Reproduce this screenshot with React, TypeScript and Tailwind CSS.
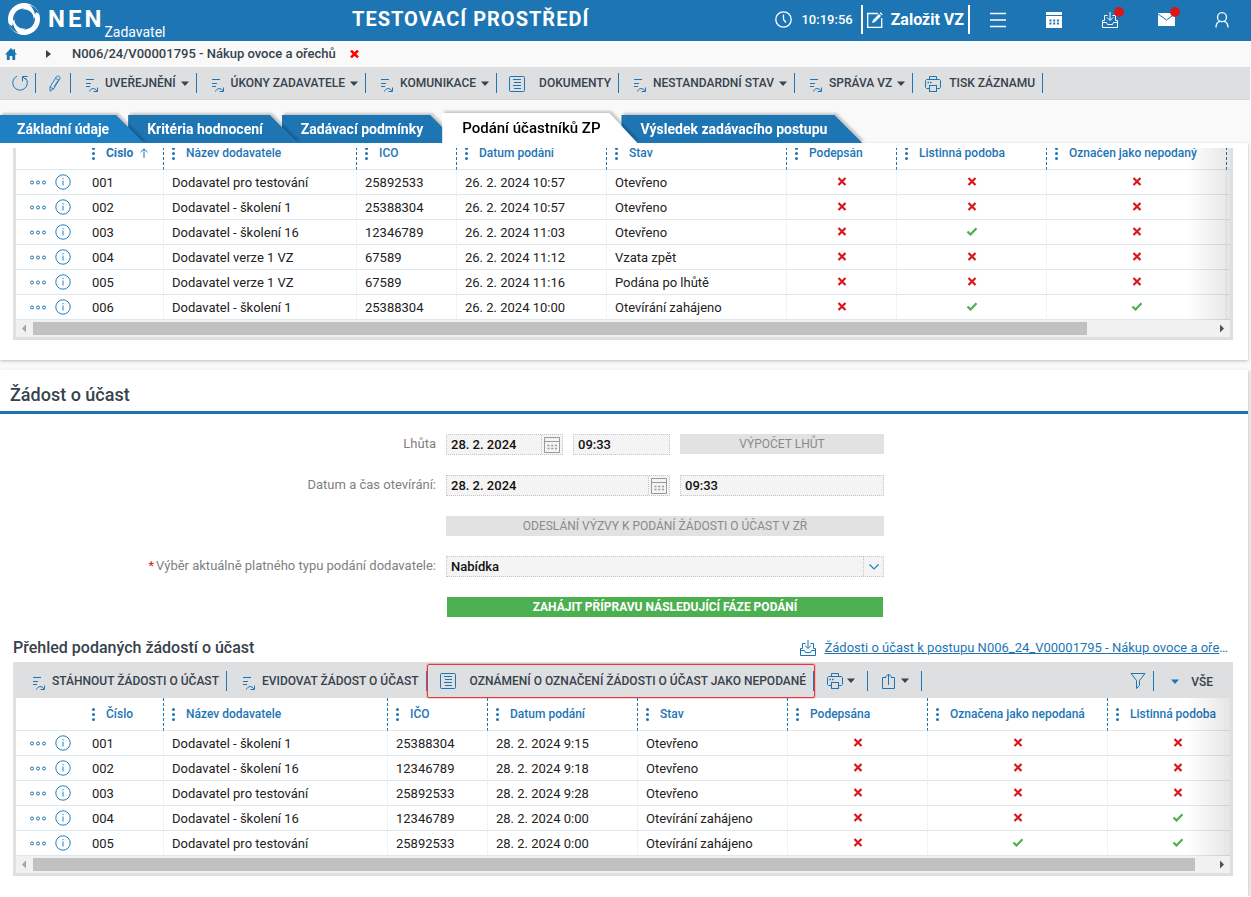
import React from 'react';

interface Column {
  label: string;
  width: string;
  sorted?: boolean;
}

type Cell = string | boolean;

interface SubmissionTableProps {
  caption: string;
  columns: Column[];
  rows: Cell[][];
  thumb: number;
  filler?: boolean;
  scrolled?: boolean;
}

const ListIcon = () => (
  <svg width="14" height="16" viewBox="0 0 14 16" fill="none" stroke="#1e75b4" className="shrink-0">
    <path d="M1 2.500h8M1 6.500h5M1 9.500h4" />
    <path d="M4.500 14.500c1-3.500 5.500-4 7.500-.5M12.500 10.500v4H8.500" />
  </svg>
);

const DocumentIcon = () => (
  <svg width="16" height="16" viewBox="0 0 16 16" fill="none" stroke="#1e75b4" className="shrink-0">
    <rect x=".5" y=".5" width="15" height="15" rx="1" />
    <path d="M4 3.500h8M5 6.500h7M4 9.500h8M5 12.500h7" />
  </svg>
);

const PrintIcon = () => (
  <svg width="16" height="16" viewBox="0 0 16 16" fill="none" stroke="#1e75b4" className="shrink-0">
    <path d="M4.500 3.500v-3h7v3M4.500 12.500h-3l-1-1v-7l1-1h13l1 1v7l-1 1h-3" />
    <rect x="4.500" y="9.500" width="7" height="6" />
    <path d="M2.500 6.500h1.500M5 6.500h1.500" strokeWidth="1.500" />
  </svg>
);

const InboxIcon = ({ color = '#1e75b4' }: { color?: string }) => (
  <svg width="16" height="16" viewBox="0 0 16 16" fill="none" stroke={color} className="shrink-0">
    <path d="M5.500 3.500H2.500v5M10.500 3.500h3v5M.5 8.500v7h15v-7h-2M2.500 8.500H.5M.5 10.500h4l1 2h5l1-2h4M8 0v8M5 5.500l3 3 3-3" />
  </svg>
);

const CalendarIcon = () => (
  <svg width="16" height="16" viewBox="0 0 16 16" fill="none" stroke="#999" className="shrink-0">
    <path d="M.5 .5h15v15H.5zM.5 4.500h15" />
    <path d="M3.500 8.500h10M3.500 11.500h10" strokeWidth="1.500" strokeDasharray="2 1.700" />
  </svg>
);

const Caret = ({ color = '#36424c' }: { color?: string }) => (
  <svg width="8" height="5" viewBox="0 0 8 5" fill={color} className="shrink-0">
    <path d="M0 .5h8L4 5z" />
  </svg>
);

const Mark = ({ value }: { value: boolean }) =>
  value ? (
    <svg width="12" height="9" viewBox="0 0 12 9" fill="none" stroke="#4caf50" strokeWidth="2.200" className="mx-auto mb-1">
      <title>Ano</title>
      <path d="M1.500 4.500L4.500 7.500L10.500 1.200" />
    </svg>
  ) : (
    <svg width="10" height="9" viewBox="0 0 10 9" fill="none" stroke="#d8171b" strokeWidth="2.200" className="mx-auto mb-1">
      <title>Ne</title>
      <path d="M1.500 1l7 7M8.500 1l-7 7" />
    </svg>
  );

const RowActions = () => (
  <div className="flex items-center gap-[9px] pl-[14px]">
    <button type="button" aria-label="Akce">
      <svg width="16" height="5" viewBox="0 0 16 5" fill="none" stroke="#1e75b4">
        <circle cx="2" cy="2.500" r="1.500" />
        <circle cx="8" cy="2.500" r="1.500" />
        <circle cx="14" cy="2.500" r="1.500" />
      </svg>
    </button>
    <button type="button" aria-label="Detail">
      <svg width="16" height="16" viewBox="0 0 16 16" fill="none" stroke="#1e80c2">
        <circle cx="8" cy="8" r="7.200" />
        <path d="M8 6.500v5M8 4v1.200" />
      </svg>
    </button>
  </div>
);

const Scrollbar = ({ thumb }: { thumb: number }) => (
  <div className="flex h-[17px] items-center bg-[#f1f1f1]">
    <svg width="17" height="9" viewBox="0 0 17 9" fill="#a3a3a3" className="shrink-0">
      <path d="M10 .5v8L6 4.500z" />
    </svg>
    <div className="h-[13px] flex-1">
      <div className="h-full bg-[#c1c1c1]" style={{ width: `${thumb}%` }} />
    </div>
    <svg width="17" height="9" viewBox="0 0 17 9" fill="#505050" className="shrink-0">
      <path d="M7 .5v8l4-4z" />
    </svg>
  </div>
);

const SubmissionTable: React.FC<SubmissionTableProps> = ({ caption, columns, rows, thumb, filler, scrolled }) => (
  <div className="border-x-[3px] border-b-[3px] border-[#dedfe0]">
    <div className="relative overflow-hidden">
      <table
        aria-label={caption}
        className={`w-full table-fixed border-separate border-spacing-0 text-[13px] leading-[18px] text-[#222] ${scrolled ? '-mt-[11px]' : ''}`}
      >
        <colgroup>
          <col className="w-[68px]" />
          {columns.map((column) => (
            <col key={column.label} className={column.width} />
          ))}
          {filler && <col />}
        </colgroup>
        <thead>
          <tr className="text-left text-xs text-[#1e75b4]">
            <th className="h-[33px] border-b border-[#dde8ec]" />
            {columns.map(({ label, sorted }) => (
              <th key={label} className="h-[33px] border-r border-b border-r-[#1e75b4] border-b-[#dde8ec] p-0 pl-2 font-medium [border-right-style:dashed]">
                <div className="flex items-center gap-[11px] whitespace-nowrap">
                  <svg width="3" height="13" viewBox="0 0 3 13" fill="#1e75b4" className="shrink-0">
                    <circle cx="1.500" cy="1.500" r="1.500" />
                    <circle cx="1.500" cy="6.500" r="1.500" />
                    <circle cx="1.500" cy="11.500" r="1.500" />
                  </svg>
                  <span className={sorted ? 'font-bold' : ''}>{label}</span>
                  {sorted && (
                    <svg width="8" height="10" viewBox="0 0 8 10" fill="none" stroke="#1e75b4" className="-ml-1 shrink-0">
                      <path d="M4 10V1M.5 4.200L4 .8l3.500 3.400" />
                    </svg>
                  )}
                </div>
              </th>
            ))}
            {filler && <th className="border-b border-[#dde8ec]" />}
          </tr>
        </thead>
        <tbody>
          {rows.map((row) => (
            <tr key={String(row[0])}>
              <td className="h-[25px] border-b border-[#dde8ec] p-0">
                <RowActions />
              </td>
              {row.map((cell, index) => (
                <td
                  key={index}
                  className="h-[25px] border-r border-b border-[#dde8ec] p-0 pt-0.5 whitespace-nowrap [border-right-style:dotted]"
                >
                  {typeof cell === 'boolean' ? <Mark value={cell} /> : <span className="pl-2">{cell}</span>}
                </td>
              ))}
              {filler && <td className="border-b border-[#dde8ec]" />}
            </tr>
          ))}
        </tbody>
      </table>
      <div className="pointer-events-none absolute inset-y-0 right-0 w-11 bg-linear-to-r from-transparent to-black/10" />
    </div>
    <Scrollbar thumb={thumb} />
  </div>
);

interface ToolButtonProps {
  label: string;
  icon?: 'list' | 'document' | 'print';
  caret?: boolean;
}

const ToolButton: React.FC<ToolButtonProps> = ({ label, icon = 'list', caret }) => (
  <button
    type="button"
    className={`flex h-5 items-center border-r border-[#1e75b4] pr-[7px] whitespace-nowrap ${icon === 'list' ? 'pl-[14px]' : 'pl-3'}`}
  >
    {icon === 'list' && <span className="mt-1 mr-1.5"><ListIcon /></span>}
    {icon === 'document' && <span className="mt-px mr-[14px]"><DocumentIcon /></span>}
    {icon === 'print' && <span className="mt-px mr-2"><PrintIcon /></span>}
    {label}
    {caret && <span className="ml-[5px]"><Caret /></span>}
  </button>
);

const tabs = [
  { label: 'Základní údaje', layer: 'z-30', look: 'h-7 bg-[#1e80c2] pr-[35px] pl-[17px] font-bold text-white text-sm' },
  { label: 'Kritéria hodnocení', layer: 'z-20 -ml-4', look: 'h-7 bg-[#1e75b4] pr-[35px] pl-[19px] font-bold text-white text-sm' },
  { label: 'Zadávací podmínky', layer: 'z-10 -ml-4', look: 'h-7 bg-[#1e75b4] pr-[35px] pl-[19px] font-bold text-white text-sm' },
  { label: 'Podání účastníků ZP', layer: 'z-40 -ml-4', look: 'h-[30px] bg-white pr-[37px] pl-5 font-medium text-black text-[15px]' },
  { label: 'Výsledek zadávacího postupu', layer: 'z-0 -ml-4', look: 'h-7 bg-[#1e75b4] pr-[35px] pl-[19px] font-bold text-white text-sm' }
];

const bidColumns: Column[] = [
  { label: 'Číslo', width: 'w-[80px]', sorted: true },
  { label: 'Název dodavatele', width: 'w-[193px]' },
  { label: 'IČO', width: 'w-[100px]' },
  { label: 'Datum podání', width: 'w-[150px]' },
  { label: 'Stav', width: 'w-[180px]' },
  { label: 'Podepsán', width: 'w-[110px]' },
  { label: 'Listinná podoba', width: 'w-[150px]' },
  { label: 'Označen jako nepodaný', width: 'w-[180px]' }
];

const bids: Cell[][] = [
  ['001', 'Dodavatel pro testování', '25892533', '26. 2. 2024 10:57', 'Otevřeno', false, false, false],
  ['002', 'Dodavatel - školení 1', '25388304', '26. 2. 2024 10:57', 'Otevřeno', false, false, false],
  ['003', 'Dodavatel - školení 16', '12346789', '26. 2. 2024 11:03', 'Otevřeno', false, true, false],
  ['004', 'Dodavatel verze 1 VZ', '67589', '26. 2. 2024 11:12', 'Vzata zpět', false, false, false],
  ['005', 'Dodavatel verze 1 VZ', '67589', '26. 2. 2024 11:16', 'Podána po lhůtě', false, false, false],
  ['006', 'Dodavatel - školení 1', '25388304', '26. 2. 2024 10:00', 'Otevírání zahájeno', false, true, true]
];

const requestColumns: Column[] = [
  { label: 'Číslo', width: 'w-[80px]' },
  { label: 'Název dodavatele', width: 'w-[224px]' },
  { label: 'IČO', width: 'w-[100px]' },
  { label: 'Datum podání', width: 'w-[150px]' },
  { label: 'Stav', width: 'w-[150px]' },
  { label: 'Podepsána', width: 'w-[140px]' },
  { label: 'Označena jako nepodaná', width: 'w-[180px]' },
  { label: 'Listinná podoba', width: 'w-[140px]' }
];

const requests: Cell[][] = [
  ['001', 'Dodavatel - školení 1', '25388304', '28. 2. 2024 9:15', 'Otevřeno', false, false, false],
  ['002', 'Dodavatel - školení 16', '12346789', '28. 2. 2024 9:18', 'Otevřeno', false, false, false],
  ['003', 'Dodavatel pro testování', '25892533', '28. 2. 2024 9:28', 'Otevřeno', false, false, false],
  ['004', 'Dodavatel - školení 16', '12346789', '28. 2. 2024 0:00', 'Otevírání zahájeno', false, false, true],
  ['005', 'Dodavatel pro testování', '25892533', '28. 2. 2024 0:00', 'Otevírání zahájeno', false, true, true]
];

const fieldClass = 'border border-dotted border-[#c4c4c4] bg-[#f4f4f4] text-[13px] font-medium text-[#111]';

const DateField = ({ id, width }: { id: string; width: string }) => (
  <div className={`flex h-[21px] items-stretch ${fieldClass} ${width}`}>
    <input id={id} defaultValue="28. 2. 2024" className="w-0 flex-1 border-r border-dotted border-[#c4c4c4] pl-1 outline-none" />
    <button type="button" aria-label="Vybrat datum" className="flex w-5 items-center justify-center">
      <CalendarIcon />
    </button>
  </div>
);

const Header = () => (
  <header className="flex h-[41px] items-start bg-[#1e75b4] pr-[21px] text-white">
    <div className="flex w-[352px] shrink-0 pl-2">
      <svg width="32" height="32" viewBox="0 0 32 32" className="mt-[3px]">
        <circle cx="16" cy="16" r="16" fill="#fff" />
        <circle cx="16" cy="16" r="9.800" fill="#1e75b4" />
        <path d="M.8 20.500C2.500 26 6.500 29 10.500 30C7.500 27.500 5.500 24 4.800 19.500C5 24 3 23 .8 20.500z" fill="#1e75b4" />
        <path d="M31.200 11.500C29.500 6 25.500 3 21.500 2C24.500 4.500 26.500 8 27.200 12.500C27 8 29 9 31.200 11.500z" fill="#1e75b4" />
        <path d="M5 18C4.500 11 9 5.500 16 5.500L10 11z" fill="#1e75b4" />
        <path d="M27 14C27.500 21 23 26.500 16 26.500L22 21z" fill="#1e75b4" />
      </svg>
      <span className="mt-[5px] ml-2 text-2xl leading-7 font-bold tracking-[3px]">NEN</span>
      <span className="mt-6 text-sm leading-4">Zadavatel</span>
    </div>
    <div className="mt-1.5 text-xl leading-[26px] font-bold tracking-[1px] whitespace-nowrap">TESTOVACÍ PROSTŘEDÍ</div>
    <div className="mt-[5px] ml-auto flex h-[29px] items-center">
      <svg width="17" height="17" viewBox="0 0 17 17" fill="none" stroke="#fff" strokeWidth="1.300">
        <circle cx="8.500" cy="8.500" r="7.700" />
        <path d="M8.500 3.500v5l2.500 3" />
      </svg>
      <span className="ml-[9px] text-[13px] font-medium">10:19:56</span>
      <button type="button" className="ml-2 flex h-[29px] items-center gap-2 border-x-2 border-white px-1 text-base font-bold whitespace-nowrap">
        <svg width="16" height="16" viewBox="0 0 16 16" fill="none" stroke="#fff">
          <path d="M11 1.500H.7v13.800h14V6" strokeWidth="1.300" />
          <path d="M5 11l1-3 6-6 2 2-6 6z" fill="#fff" stroke="none" />
          <path d="M12.700 1.300l1-1 2 2-1 1z" fill="#fff" stroke="none" />
        </svg>
        Založit VZ
      </button>
      <div className="ml-5 flex items-center gap-10">
        <button type="button" aria-label="Menu">
          <svg width="16" height="16" viewBox="0 0 16 16" stroke="#fff" strokeWidth="1.500">
            <path d="M0 1.500h16M0 8h16M0 14.500h16" />
          </svg>
        </button>
        <button type="button" aria-label="Kalendář">
          <svg width="16" height="16" viewBox="0 0 16 16">
            <path d="M0 0h16v3H0zM0 4h16v12H0z" fill="#fff" />
            <path d="M3.500 8.500h10M3.500 11.500h10" stroke="#1e75b4" strokeWidth="1.800" strokeDasharray="2 1.700" />
          </svg>
        </button>
        <button type="button" aria-label="Stažené" className="relative">
          <InboxIcon color="#fff" />
          <span className="absolute -top-[5px] -right-[6px] size-[10px] rounded-full bg-[#d8171b]" />
        </button>
        <button type="button" aria-label="Zprávy" className="relative">
          <svg width="17" height="13" viewBox="0 0 17 13" className="-mr-px">
            <path d="M0 0h17v13H0z" fill="#fff" />
            <path d="M0 1l8.500 6L17 1" fill="none" stroke="#1e75b4" />
          </svg>
          <span className="absolute -top-[6px] -right-[6px] size-[10px] rounded-full bg-[#d8171b]" />
        </button>
        <button type="button" aria-label="Uživatel">
          <svg width="16" height="16" viewBox="0 0 16 16" fill="none" stroke="#fff" strokeWidth="1.300">
            <circle cx="8" cy="5.200" r="4.500" />
            <path d="M2 15.500C2 12 3.500 9.800 6 9.300M14 15.500C14 12 12.500 9.800 10 9.300" />
          </svg>
        </button>
      </div>
    </div>
  </header>
);

export default function App() {
  return (
    <div className="bg-[#f9f9f9] font-[Roboto,'Liberation_Sans',sans-serif] text-[#36424c]">
      <Header />

      <nav className="flex h-[26px] items-center text-[13px] font-medium">
        <a href="#" aria-label="Domů" className="ml-[5px]">
          <svg width="12" height="12" viewBox="0 0 12 12" fill="#1e75b4">
            <path d="M6 0L0 6.500h1.800V12H4.700V8h2.600v4h2.900V6.500H12L10 4.300V1H8.500v1.700z" />
          </svg>
        </a>
        <svg width="5" height="8" viewBox="0 0 5 8" fill="#36424c" className="ml-[29px]">
          <path d="M0 0v8l5-4z" />
        </svg>
        <span className="ml-[21px]">N006/24/V00001795 - Nákup ovoce a ořechů</span>
        <button type="button" aria-label="Zavřít" className="ml-[14px]">
          <svg width="9" height="8" viewBox="0 0 9 8" stroke="#f00" strokeWidth="2.500">
            <path d="M1 .5l7 7M8 .5l-7 7" />
          </svg>
        </button>
      </nav>

      <div className="mr-px flex h-[33px] items-center border-b border-[#d6d8da] bg-[#dddfe1] text-xs font-medium">
        <button type="button" aria-label="Obnovit" className="flex h-5 items-center border-r border-[#1e75b4] pr-[7px] pl-3">
          <svg width="16" height="16" viewBox="0 0 16 16" fill="none" stroke="#1e75b4">
            <path d="M5 1.200A7.300 7.300 0 1 0 13.500 3M15.500 1.500h-5v5M11 2l2.500 2.500" />
          </svg>
        </button>
        <button type="button" aria-label="Upravit" className="flex h-5 items-center border-r border-[#1e75b4] pr-[9px] pl-[13px]">
          <svg width="12" height="17" viewBox="0 0 12 17" fill="none" stroke="#1e75b4" strokeWidth=".9">
            <path d="M1 12L7.500 1.500c1-1.500 4.500.5 3.500 2L4.500 14 1 16.200zM1 12l3.500 2M6.500 3.200l3.500 2M5 12l4-6.500" />
          </svg>
        </button>
        <ToolButton label="UVEŘEJNĚNÍ" caret />
        <ToolButton label="ÚKONY ZADAVATELE" caret />
        <ToolButton label="KOMUNIKACE" caret />
        <ToolButton label="DOKUMENTY" icon="document" />
        <ToolButton label="NESTANDARDNÍ STAV" caret />
        <ToolButton label="SPRÁVA VZ" caret />
        <ToolButton label="TISK ZÁZNAMU" icon="print" />
      </div>

      <div className="flex h-[43px] items-end">
        {tabs.map(({ label, layer, look }) => (
          <div key={label} className={`relative drop-shadow-[2px_-2px_1px_rgba(0,0,0,0.2)] ${layer}`}>
            <button
              type="button"
              className={`flex items-center whitespace-nowrap [clip-path:polygon(0_0,calc(100%_-_28px)_0,100%_100%,0_100%)] ${look}`}
            >
              {label}
            </button>
          </div>
        ))}
      </div>

      <main>
        <section className="mr-[3px] bg-white pt-[5px] pr-[15px] pb-5 pl-[13px] shadow-[0_1px_3px_rgba(0,0,0,0.25)]">
          <SubmissionTable caption="Podání účastníků" columns={bidColumns} rows={bids} thumb={89.3} filler scrolled />
        </section>

        <section className="mt-[10px] mr-[3px] bg-white pb-5 shadow-[2px_1px_3px_rgba(0,0,0,0.15)]">
          <h2 className="h-11 border-b-[3px] border-[#1e75b4] pt-3 pl-[10px] text-lg leading-[26px] font-medium">Žádost o účast</h2>

          <form className="mt-5 grid grid-cols-[436px_438px] items-center gap-x-[10px] gap-y-5 text-[13px] text-[#808080]">
            <label htmlFor="deadline" className="-my-px pb-0.5 text-right">Lhůta</label>
            <div className="flex gap-[10px]">
              <DateField id="deadline" width="w-[117px]" />
              <input aria-label="Čas lhůty" defaultValue="09:33" className={`h-[21px] w-[97px] pl-1 ${fieldClass}`} />
              <button type="button" disabled className="h-5 flex-1 bg-[#e2e2e2] text-xs text-[#8a8a8a]">VÝPOČET LHŮT</button>
            </div>

            <label htmlFor="opening" className="-my-px pb-0.5 text-right">Datum a čas otevírání:</label>
            <div className="flex gap-[10px]">
              <DateField id="opening" width="w-[224px]" />
              <input aria-label="Čas otevírání" defaultValue="09:33" className={`h-[21px] w-0 flex-1 pl-1 ${fieldClass}`} />
            </div>

            <button type="button" disabled className="col-start-2 h-5 bg-[#e2e2e2] text-xs text-[#8a8a8a]">
              ODESLÁNÍ VÝZVY K PODÁNÍ ŽÁDOSTI O ÚČAST V ZŘ
            </button>

            <label htmlFor="type" className="-my-px pb-0.5 text-right">
              <span className="mr-0.5 text-[#d8171b]">*</span>Výběr aktuálně platného typu podání dodavatele:
            </label>
            <div className="relative">
              <select id="type" className={`block h-[21px] w-full appearance-none pl-1 ${fieldClass}`}>
                <option>Nabídka</option>
              </select>
              <span className="pointer-events-none absolute inset-y-px right-px flex w-5 items-center justify-center border-l border-dotted border-[#c4c4c4]">
                <svg width="10" height="6" viewBox="0 0 10 6" fill="none" stroke="#1e80c2" strokeWidth="1.200">
                  <path d="M.5.5L5 5 9.500.5" />
                </svg>
              </span>
            </div>

            <button type="button" className="col-start-2 mx-px h-5 bg-[#4caf50] text-xs font-bold text-white">
              ZAHÁJIT PŘÍPRAVU NÁSLEDUJÍCÍ FÁZE PODÁNÍ
            </button>
          </form>

          <div className="mt-5 mr-[15px] ml-[13px]">
            <div className="flex h-[25px] items-start justify-between pt-px pr-[5px]">
              <h3 className="text-base leading-5 font-medium">Přehled podaných žádostí o účast</h3>
              <div className="flex items-center gap-2 text-[13px] leading-5 text-[#1e75b4]">
                <InboxIcon />
                <span className="whitespace-nowrap">
                  <a href="#" className="underline">Žádosti o účast k postupu N006_24_V00001795 - Nákup ovoce a oře</a>…
                </span>
              </div>
            </div>

            <div className="flex h-9 items-center gap-px bg-[#dedfe0] pt-px pr-5 pl-[5px] text-xs font-medium">
              <ToolButton label="STÁHNOUT ŽÁDOSTI O ÚČAST" />
              <ToolButton label="EVIDOVAT ŽÁDOST O ÚČAST" />
              <div className="relative">
                <ToolButton label="OZNÁMENÍ O OZNAČENÍ ŽÁDOSTI O ÚČAST JAKO NEPODANÉ" icon="document" />
                <span className="pointer-events-none absolute -inset-x-px -inset-y-[7px] rounded-xs border border-[#e8383c] ring-1 ring-[#f06468]/30" />
              </div>
              <button type="button" aria-label="Tisk" className="flex h-5 items-center gap-1 border-r border-[#1e75b4] pr-3 pl-3">
                <PrintIcon />
                <Caret />
              </button>
              <button type="button" aria-label="Export" className="flex h-5 items-center gap-1 border-r border-[#1e75b4] pr-3 pl-3">
                <svg width="16" height="16" viewBox="0 0 16 16" fill="none" stroke="#1e75b4">
                  <path d="M5 4.500H1.500v11h12v-11H10M7.500 12V1M4.500 4l3-3 3 3" />
                </svg>
                <Caret />
              </button>
              <button type="button" aria-label="Filtr" className="ml-auto flex h-5 items-center border-r border-[#1e75b4] pr-[7px]">
                <svg width="16" height="16" viewBox="0 0 16 16" fill="none" stroke="#1e75b4">
                  <path d="M1 .5h14L9.500 7.500v5l-3 3v-8z" />
                </svg>
              </button>
              <button type="button" className="flex items-center gap-3 pt-0.5 pl-4">
                <Caret color="#1e75b4" />
                VŠE
              </button>
            </div>
            <SubmissionTable caption="Přehled podaných žádostí o účast" columns={requestColumns} rows={requests} thumb={98.5} />
          </div>
        </section>
      </main>
    </div>
  );
}
